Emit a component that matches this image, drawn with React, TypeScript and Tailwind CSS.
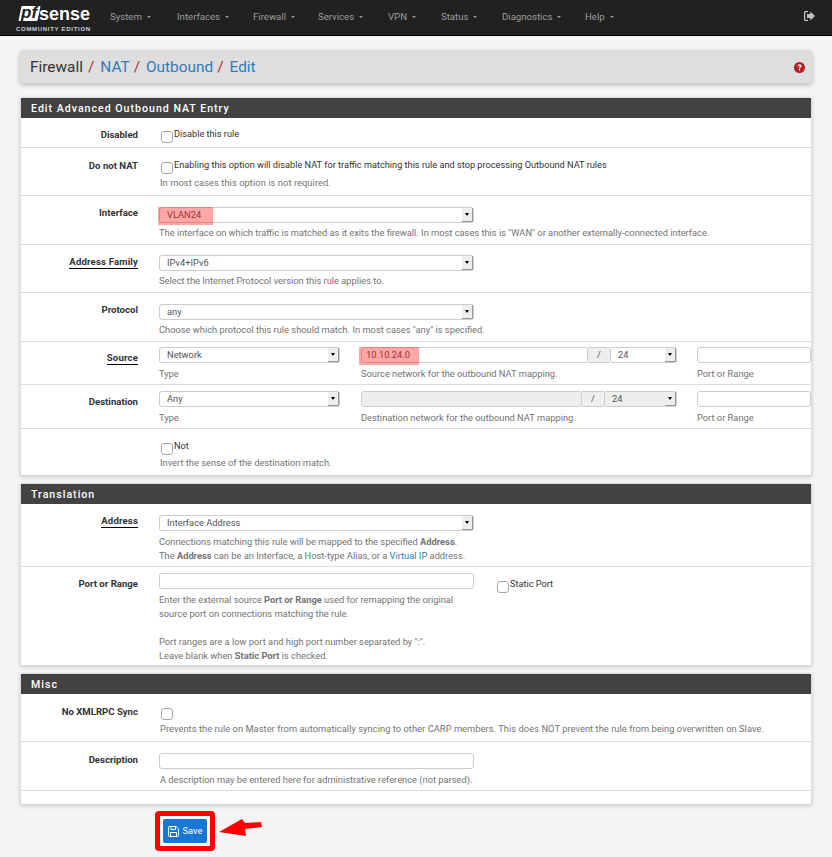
const Chevron = () => (
  <span className="inline-block ml-[5px] mb-[1px] align-middle w-0 h-0 border-x-[2px] border-x-transparent border-t-[2px] border-t-[#9d9d9d]" />
);

const navItems = [
  { name: "System", width: "w-[67px]" },
  { name: "Interfaces", width: "w-[76px]" },
  { name: "Firewall", width: "w-[65px]" },
  { name: "Services", width: "w-[70px]" },
  { name: "VPN", width: "w-[53px]" },
  { name: "Status", width: "w-[61px]" },
  { name: "Diagnostics", width: "w-[83px]" },
  { name: "Help", width: "w-[40px]" },
];

const Nav = () => (
  <div className="h-[36px] bg-[#212121] border-b border-black flex items-center pl-[16px] pr-[17px] shrink-0">
    <div className="w-[75px] h-[33px] relative shrink-0">
      <div className="absolute left-[4px] top-[5px] w-[19px] h-[15px] bg-white skew-x-[-12deg] rounded-[1px]" />
      <span className="absolute left-[5px] top-[4px] text-[#212121] text-[17px] leading-[16px] font-bold italic font-['Liberation_Sans',sans-serif]">pf</span>
      <span className="absolute left-[23px] top-[2px] text-white text-[18px] leading-[22px] font-bold font-['Liberation_Sans',sans-serif]">sense</span>
      <span className="absolute left-0 top-[24px] text-[#c8d4dc] text-[6px] leading-[8px] font-bold tracking-[0.7px] whitespace-nowrap font-['Liberation_Sans',sans-serif]">COMMUNITY EDITION</span>
    </div>
    <div className="flex items-center ml-[19px] text-[9.6px] text-[#9d9d9d]">
      {navItems.map((n) => (
        <span key={n.name} className={`${n.width} whitespace-nowrap`}>
          {n.name}
          <Chevron />
        </span>
      ))}
    </div>
    <svg className="ml-auto mb-[3px]" width="11" height="10" viewBox="0 0 11 10" fill="#c4c4c4">
      <path d="M4 0H1.5C.6 0 0 .6 0 1.5v7C0 9.4.6 10 1.5 10H4V8.8H1.8c-.4 0-.6-.2-.6-.6V1.8c0-.4.2-.6.6-.6H4z" />
      <path d="M6.3 .6v2.5H3v3.8h3.3v2.5L11 5z" />
    </svg>
  </div>
);

const Help = ({ children }: { children: React.ReactNode }) => (
  <p className="text-[9.3px] leading-[14px] text-[#737373] whitespace-nowrap">{children}</p>
);

const Label = ({ text, under, labelTop }: { text: string; under?: boolean; labelTop?: string }) => (
  <div className={`w-[117px] shrink-0 text-right text-[9.6px] leading-[13px] font-bold text-[#333] ${labelTop ?? ""}`}>
    <span className={under ? "border-b border-black inline-block leading-[12px] tracking-[0.15px]" : ""}>{text}</span>
  </div>
);

type RowProps = { label: string; under?: boolean; h: string; pt: string; labelTop?: string; children?: React.ReactNode };

const Row = ({ label, under, h, pt, labelTop, children }: RowProps) => (
  <div className={`${h} ${pt} flex border-b border-[#ddd]`}>
    <Label text={label} under={under} labelTop={labelTop} />
    <div className="ml-[21px] flex-1 min-w-0">{children}</div>
  </div>
);

const Select = ({ value, width, disabled, mark }: { value: string; width: string; disabled?: boolean; mark?: boolean }) => (
  <div className={`${width} h-[16px] relative shrink-0 flex items-center border border-[#ccc] rounded-[3px] pl-[7px] text-[9.3px] text-[#555] ${disabled ? "bg-[#eee]" : "bg-white"}`}>
    {value}
    <div className="absolute right-0 top-0 bottom-0 w-[11px] bg-[#eee] border-r border-b border-[#999] flex items-center justify-center">
      <span className="w-0 h-0 border-x-[2.5px] border-x-transparent border-t-[3px] border-t-black" />
    </div>
    {mark && <div className="absolute left-[-2px] top-[-1px] w-[55px] h-[18px] bg-[#ff0000]/35" />}
  </div>
);

const TextBox = ({ width, disabled, children }: { width: string; disabled?: boolean; children?: React.ReactNode }) => (
  <div className={`${width} h-[16px] relative border border-[#ccc] rounded-[3px] shrink-0 text-[9.3px] text-[#555] flex items-center pl-[4px] ${disabled ? "bg-[#eee]" : "bg-white"}`}>
    {children}
  </div>
);

const Check = () => (
  <input type="checkbox" className="appearance-none block w-[12px] h-[12px] border border-[#a8a8a8] rounded-[3px] bg-white shrink-0" />
);

const CheckLine = ({ text }: { text: string }) => (
  <div className="flex items-start h-[14px] pl-[2px] text-[9.2px] leading-[11px] text-[#333] whitespace-nowrap">
    <span className="mt-[3px] mr-[1px]"><Check /></span>
    {text}
  </div>
);

const Heading = ({ text }: { text: string }) => (
  <div className="h-[20px] bg-[#424242] text-white text-[10.6px] font-medium tracking-[1px] leading-[21px] pl-[10px]">{text}</div>
);

const Panel = ({ children }: { children: React.ReactNode }) => (
  <div className="border-x border-t border-[#ddd] bg-white shadow-[0_2px_4px_rgba(0,0,0,0.18)]">{children}</div>
);

const Slash = ({ width }: { width: string }) => (
  <div className={`${width} h-[16px] bg-[#eee] border-y border-[#ccc] flex items-center justify-center text-[9.3px] text-[#555] shrink-0`}>/</div>
);

const App = () => {
  return (
    <div className="w-[832px] h-[857px] overflow-hidden bg-[#f5f5f5] font-['Roboto',sans-serif] flex flex-col relative">
      <Nav />

      <div className="shrink-0 mx-[20px] w-[792px] mt-[14px] h-[33px] bg-[#dedede] rounded-[3px] shadow-[0_2px_5px_rgba(0,0,0,0.25)] flex items-center pl-[10px] pr-[7px] pt-[2px] text-[15.4px] text-[#333]">
        Firewall
        <span className="text-[#a9342f] mx-[5px]">/</span>
        <span className="text-[#337ab7] ml-[1px]">NAT</span>
        <span className="text-[#a9342f] ml-[4px] mr-[5px]">/</span>
        <span className="text-[#337ab7] ml-[1px]">Outbound</span>
        <span className="text-[#a9342f] ml-[4px] mr-[5px]">/</span>
        <span className="text-[#337ab7] ml-[1px]">Edit</span>
        <svg className="ml-auto" width="11" height="11" viewBox="0 0 11 11">
          <circle cx="5.5" cy="5.5" r="5.5" fill="#b51c1c" />
          <path d="M3.6 4.2c0-1.2 1-1.9 2-1.9s1.9.7 1.9 1.7c0 1.4-1.4 1.3-1.4 2.4H4.9c0-1.6 1.3-1.6 1.3-2.4 0-.4-.3-.6-.7-.6s-.7.3-.7.8zM4.9 7.1h1.2v1.3H4.9z" fill="#fff" />
        </svg>
      </div>

      <div className="shrink-0 mx-[20px] w-[792px] mt-[14px]">
        <Panel>
          <Heading text="Edit Advanced Outbound NAT Entry" />
          <Row label="Disabled" h="h-[30px]" pt="pt-[10px]">
            <CheckLine text="Disable this rule" />
          </Row>
          <Row label="Do not NAT" h="h-[48px]" pt="pt-[11px]">
            <CheckLine text="Enabling this option will disable NAT for traffic matching this rule and stop processing Outbound NAT rules" />
            <div className="pl-[1px] mt-[3px] tracking-[0.07px]"><Help>In most cases this option is not required.</Help></div>
          </Row>
          <Row label="Interface" h="h-[49px]" pt="pt-[11px]" labelTop="-mt-[1px]">
            <Select value="VLAN24" width="w-[315px]" mark />
            <div className="mt-[3px]"><Help>The interface on which traffic is matched as it exits the firewall. In most cases this is "WAN" or another externally-connected interface.</Help></div>
          </Row>
          <Row label="Address Family" under h="h-[48px]" pt="pt-[10px]">
            <Select value="IPv4+IPv6" width="w-[315px]" />
            <div className="mt-[3px]"><Help>Select the Internet Protocol version this rule applies to.</Help></div>
          </Row>
          <Row label="Protocol" h="h-[49px]" pt="pt-[11px]" labelTop="-mt-[1px]">
            <Select value="any" width="w-[315px]" />
            <div className="mt-[3px]"><Help>Choose which protocol this rule should match. In most cases "any" is specified.</Help></div>
          </Row>
          <Row label="Source" under h="h-[43px]" pt="pt-[5px]" labelTop="mt-[4px]">
            <div className="flex">
              <div className="w-[202px]"><Select value="Network" width="w-[181px]" /><div className="mt-[4px]"><Help>Type</Help></div></div>
              <div className="w-[336px]">
                <div className="flex">
                  <TextBox width="w-[227px]">
                    10.10.24.0
                    <div className="absolute left-[-3px] top-[-1px] w-[60px] h-[18px] bg-[#ff0000]/35" />
                  </TextBox>
                  <Slash width="w-[22px]" />
                  <Select value="24" width="w-[67px]" />
                </div>
                <div className="mt-[4px]"><Help>Source network for the outbound NAT mapping.</Help></div>
              </div>
              <div><TextBox width="w-[114px]" /><div className="mt-[4px]"><Help>Port or Range</Help></div></div>
            </div>
          </Row>
          <Row label="Destination" h="h-[44px]" pt="pt-[6px]" labelTop="mt-[4px]">
            <div className="flex">
              <div className="w-[202px]"><Select value="Any" width="w-[181px]" /><div className="mt-[4px]"><Help>Type</Help></div></div>
              <div className="w-[336px]">
                <div className="flex">
                  <TextBox width="w-[221px]" disabled />
                  <Slash width="w-[22px]" />
                  <Select value="24" width="w-[73px]" disabled />
                </div>
                <div className="mt-[4px]"><Help>Destination network for the outbound NAT mapping.</Help></div>
              </div>
              <div><TextBox width="w-[114px]" /><div className="mt-[4px]"><Help>Port or Range</Help></div></div>
            </div>
          </Row>
          <div className="h-[46px] pt-[11px] pl-[138px]">
            <CheckLine text="Not" />
            <div className="pl-[1px] mt-[2px]"><Help>Invert the sense of the destination match.</Help></div>
          </div>
        </Panel>

        <div className="mt-[8px]">
          <Panel>
            <Heading text="Translation" />
            <Row label="Address" under h="h-[63px]" pt="pt-[11px]" labelTop="-mt-[1px]">
              <Select value="Interface Address" width="w-[315px]" />
              <div className="mt-[4px]"><Help>Connections matching this rule will be mapped to the specified <b>Address</b>.</Help></div>
              <Help>The <b>Address</b> can be an Interface, a Host-type Alias, or a <span className="text-[#337ab7]">Virtual IP</span> address.</Help>
            </Row>
            <div className="h-[98px] pt-[6px] flex">
              <Label text="Port or Range" labelTop="mt-[4px]" />
              <div className="ml-[21px]">
                <TextBox width="w-[315px]" />
                <div className="mt-[4px]">
                  <Help>Enter the external source <b>Port or Range</b> used for remapping the original</Help>
                  <Help>source port on connections matching the rule.</Help>
                  <div className="h-[14px]" />
                  <Help>Port ranges are a low port and high port number separated by ":".</Help>
                  <Help>Leave blank when <b>Static Port</b> is checked.</Help>
                </div>
              </div>
              <div className="ml-[21px] mt-[5px]"><CheckLine text="Static Port" /></div>
            </div>
          </Panel>
        </div>

        <div className="mt-[8px]">
          <Panel>
            <Heading text="Misc" />
            <Row label="No XMLRPC Sync" h="h-[48px]" pt="pt-[11px]">
              <CheckLine text="" />
              <div className="pl-[1px] mt-[3px] tracking-[0.05px]"><Help>Prevents the rule on Master from automatically syncing to other CARP members. This does NOT prevent the rule from being overwritten on Slave.</Help></div>
            </Row>
            <Row label="Description" h="h-[49px]" pt="pt-[11px]">
              <TextBox width="w-[315px]" />
              <div className="mt-[4px] pl-[1px]"><Help>A description may be entered here for administrative reference (not parsed).</Help></div>
            </Row>
            <div className="h-[13px]" />
          </Panel>
        </div>

        <div className="mt-[7px] ml-[135px] flex items-center relative">
          <div className="border-[5px] border-[#ff0000] rounded-[4px] p-[3px] bg-white">
            <div className="w-[44px] h-[24px] bg-[#1976d2] rounded-[2px] flex items-center justify-center gap-[4px] text-white text-[9.3px]">
              <svg width="11" height="11" viewBox="0 0 11 11" fill="none" stroke="#fff" strokeWidth="1">
                <path d="M1 .5h7.2L10.5 2.8V9.5a1 1 0 0 1-1 1h-8a1 1 0 0 1-1-1v-8a1 1 0 0 1 .5-1z" />
                <path d="M3 .5v3h4.5v-3M2.5 10.5V6.5h6v4" />
              </svg>
              Save
            </div>
          </div>
          <svg className="ml-[4px] mb-[6px]" width="44" height="18" viewBox="0 0 44 18">
            <path d="M0 13L23 0L26 4L42 3L43 8L26 10L27 17z" fill="#ff0000" />
          </svg>
        </div>
      </div>
    </div>
  );
};

export default App;
